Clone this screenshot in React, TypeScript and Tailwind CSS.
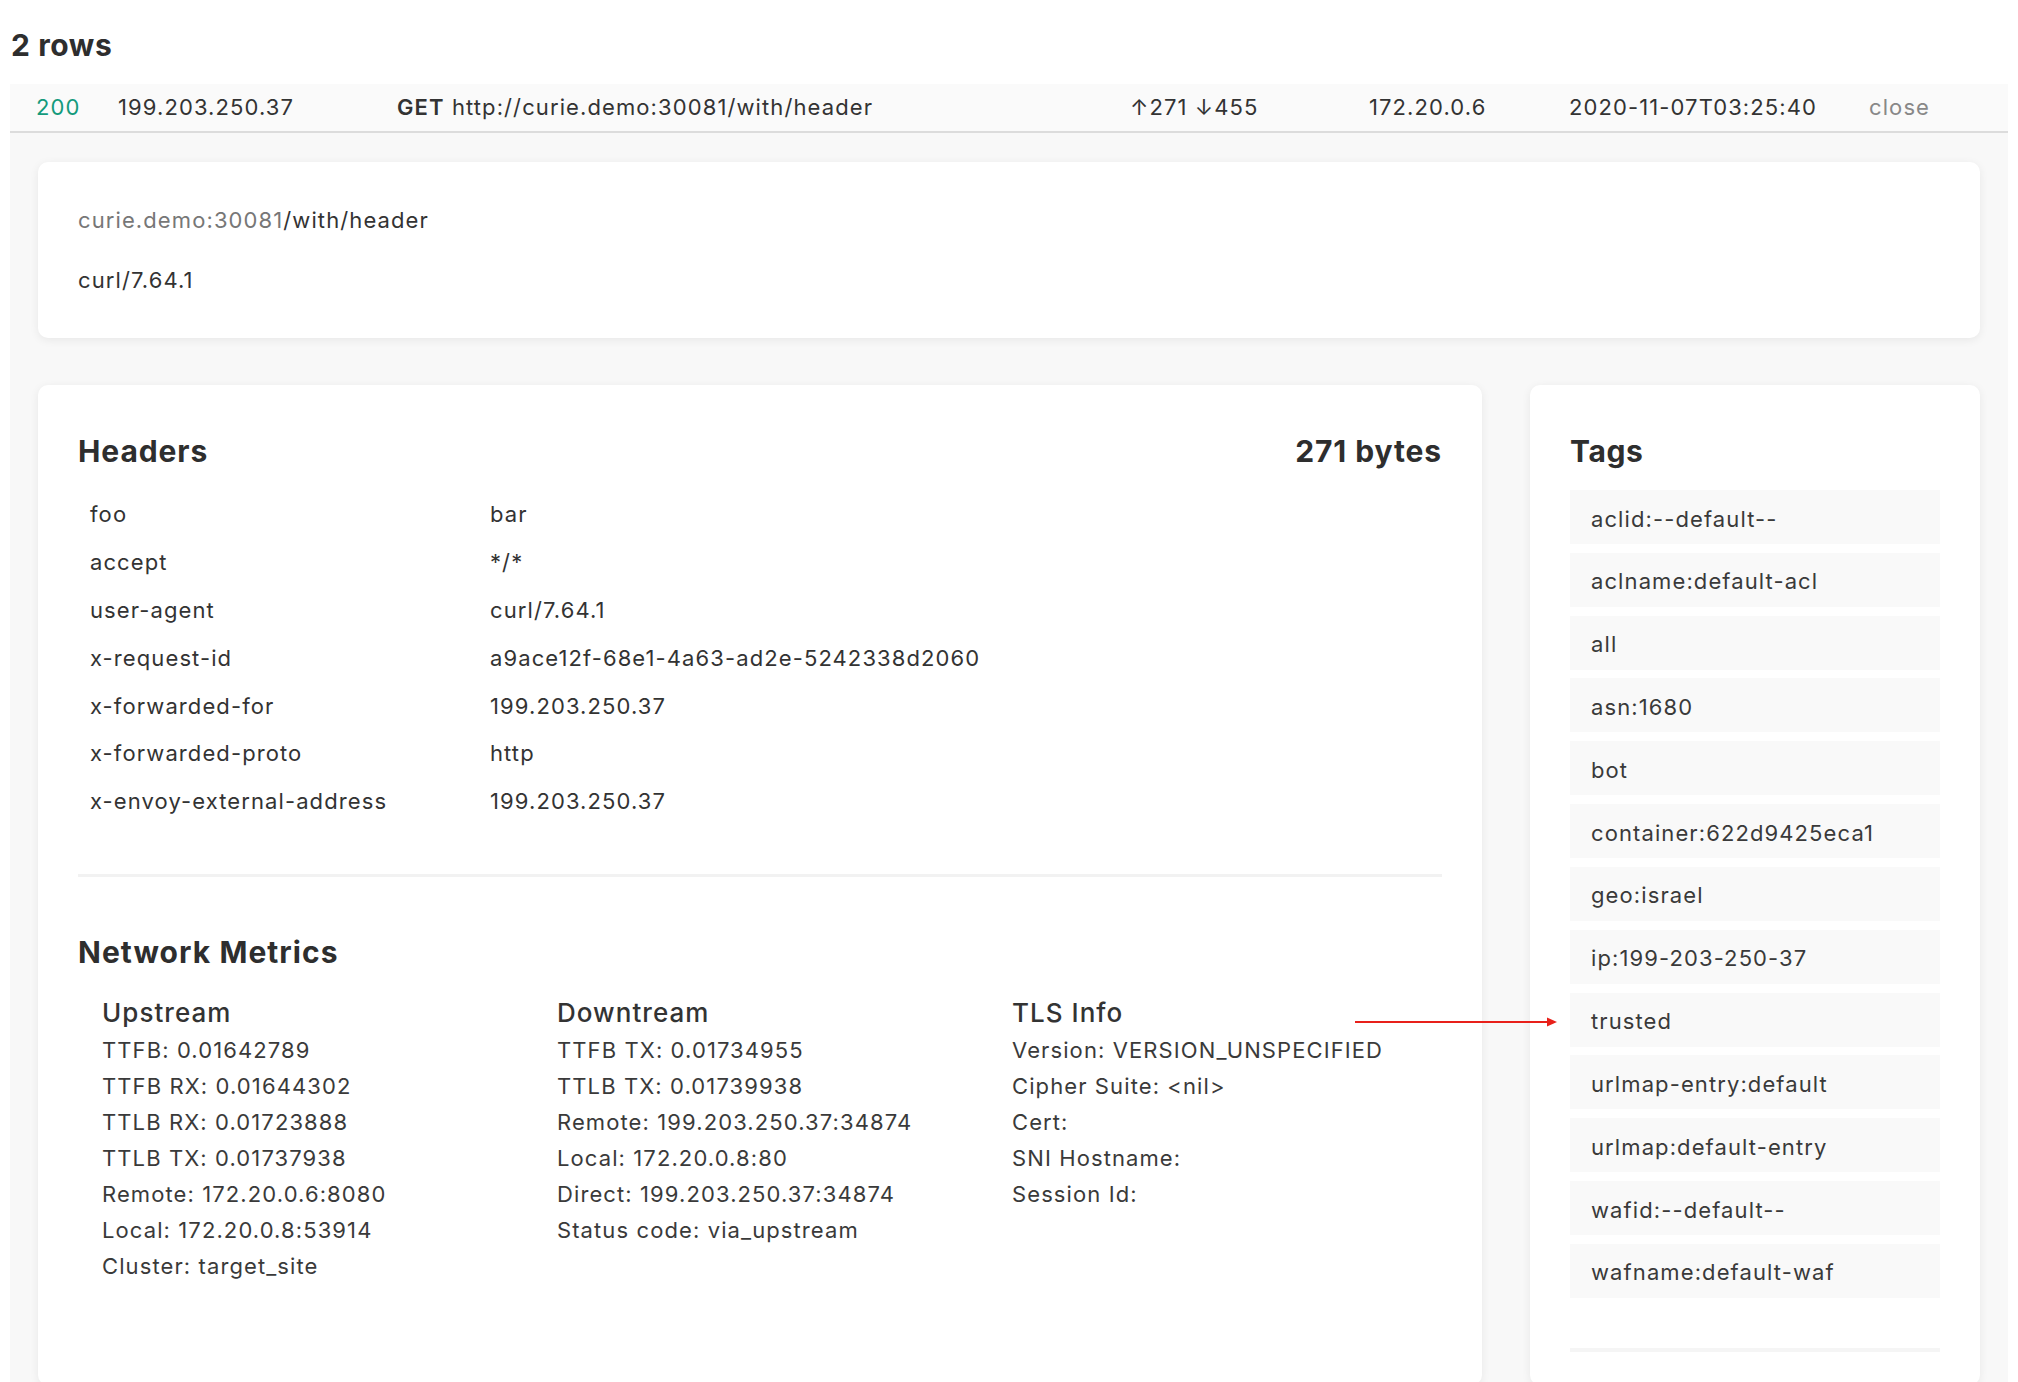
import React from "react";

const headers: [string, string][] = [
  ["foo", "bar"],
  ["accept", "*/*"],
  ["user-agent", "curl/7.64.1"],
  ["x-request-id", "a9ace12f-68e1-4a63-ad2e-5242338d2060"],
  ["x-forwarded-for", "199.203.250.37"],
  ["x-forwarded-proto", "http"],
  ["x-envoy-external-address", "199.203.250.37"],
];

const metrics: { title: string; lines: string[] }[] = [
  {
    title: "Upstream",
    lines: [
      "TTFB: 0.01642789",
      "TTFB RX: 0.01644302",
      "TTLB RX: 0.01723888",
      "TTLB TX: 0.01737938",
      "Remote: 172.20.0.6:8080",
      "Local: 172.20.0.8:53914",
      "Cluster: target_site",
    ],
  },
  {
    title: "Downtream",
    lines: [
      "TTFB TX: 0.01734955",
      "TTLB TX: 0.01739938",
      "Remote: 199.203.250.37:34874",
      "Local: 172.20.0.8:80",
      "Direct: 199.203.250.37:34874",
      "Status code: via_upstream",
    ],
  },
  {
    title: "TLS Info",
    lines: ["Version: VERSION_UNSPECIFIED", "Cipher Suite: <nil>", "Cert:", "SNI Hostname:", "Session Id:"],
  },
];

const tags = [
  "aclid:--default--",
  "aclname:default-acl",
  "all",
  "asn:1680",
  "bot",
  "container:622d9425eca1",
  "geo:israel",
  "ip:199-203-250-37",
  "trusted",
  "urlmap-entry:default",
  "urlmap:default-entry",
  "wafid:--default--",
  "wafname:default-waf",
];

export default function App() {
  return (
    <div className="relative h-[1382px] overflow-hidden bg-white font-['Inter','Liberation_Sans',sans-serif] text-[#333]">
      <div className="h-[84px] pl-[11px] pt-[27px] text-[30px] font-bold leading-[36px] tracking-[0.02em] text-[#2e2e2e]">
        2 rows
      </div>

      <div className="mx-[10px]">
        <div className="flex h-[49px] items-center border-b-2 border-[#dcdcdc] bg-[#fafafa] pb-[1px] text-[22px] tracking-[0.05em] text-[#333]">
          <span className="w-[108px] pl-[26px] text-[#149a7c]">200</span>
          <span className="w-[279px]">199.203.250.37</span>
          <span className="w-[733px]">
            <span className="font-semibold">GET</span> http://curie.demo:30081/with/header
          </span>
          <span className="w-[239px]">↑271 ↓455</span>
          <span className="w-[200px]">172.20.0.6</span>
          <span className="w-[300px]">2020-11-07T03:25:40</span>
          <span className="text-[#888]">close</span>
        </div>

        <div className="bg-[#f8f8f8] px-[28px] pt-[29px]">
          <div className="flex flex-col gap-[30px] rounded-[10px] bg-white px-[40px] py-[43px] text-[22px] leading-[30px] tracking-[0.05em] shadow-[0_2px_10px_rgba(0,0,0,0.07)]">
            <div>
              <span className="text-[#777]">curie.demo:30081</span>/with/header
            </div>
            <div>curl/7.64.1</div>
          </div>

          <div className="mt-[47px] flex gap-[48px]">
            <div className="h-[1000px] flex-1 rounded-[10px] bg-white px-[40px] pt-[48px] shadow-[0_2px_10px_rgba(0,0,0,0.07)]">
              <div className="flex justify-between text-[30px] font-bold leading-[36px] tracking-[0.03em] text-[#2e2e2e]">
                <span>Headers</span>
                <span>271 bytes</span>
              </div>
              <div className="mt-[22px] flex flex-col px-[12px] text-[22px] tracking-[0.05em]">
                {headers.map(([k, v]) => (
                  <div key={k} className="flex h-[47.8px] items-center">
                    <span className="w-[400px]">{k}</span>
                    <span>{v}</span>
                  </div>
                ))}
              </div>
              <div className="mt-[48px] h-[3px] bg-[#f2f2f2]" />
              <div className="mt-[57px] text-[30px] font-bold leading-[36px] tracking-[0.035em] text-[#2e2e2e]">
                Network Metrics
              </div>
              <div className="mt-[24px] grid grid-cols-[455px_455px_1fr] pl-[24px]">
                {metrics.map((m) => (
                  <div key={m.title}>
                    <div className="text-[26px] font-medium leading-[38px] tracking-[0.04em] text-[#333]">{m.title}</div>
                    {m.lines.map((l) => (
                      <div key={l} className="text-[22px] leading-[36px] tracking-[0.05em] text-[#3a3a3a]">
                        {l}
                      </div>
                    ))}
                  </div>
                ))}
              </div>
            </div>

            <div className="h-[1000px] w-[450px] rounded-[10px] bg-white px-[40px] pt-[48px] shadow-[0_2px_10px_rgba(0,0,0,0.07)]">
              <div className="text-[30px] font-bold leading-[36px] tracking-[0.02em] text-[#2e2e2e]">Tags</div>
              <div className="mt-[21px] flex flex-col gap-[8.83px]">
                {tags.map((t) => (
                  <div
                    key={t}
                    className="flex h-[54px] items-center bg-[#f9f9f9] px-[21px] pt-[4px] text-[22px] tracking-[0.05em] text-[#3a3a3a]"
                  >
                    {t}
                  </div>
                ))}
              </div>
              <div className="mt-[50px] h-[4px] bg-[#f5f5f5]" />
            </div>
          </div>
        </div>
      </div>

      <svg className="absolute left-[1355px] top-[1016px]" width="202" height="12" viewBox="0 0 202 12">
        <line x1="0" y1="6" x2="193" y2="6" stroke="#e8201a" strokeWidth="2" />
        <polygon points="192,1.5 202,6 192,10.5" fill="#e8201a" />
      </svg>
    </div>
  );
}
